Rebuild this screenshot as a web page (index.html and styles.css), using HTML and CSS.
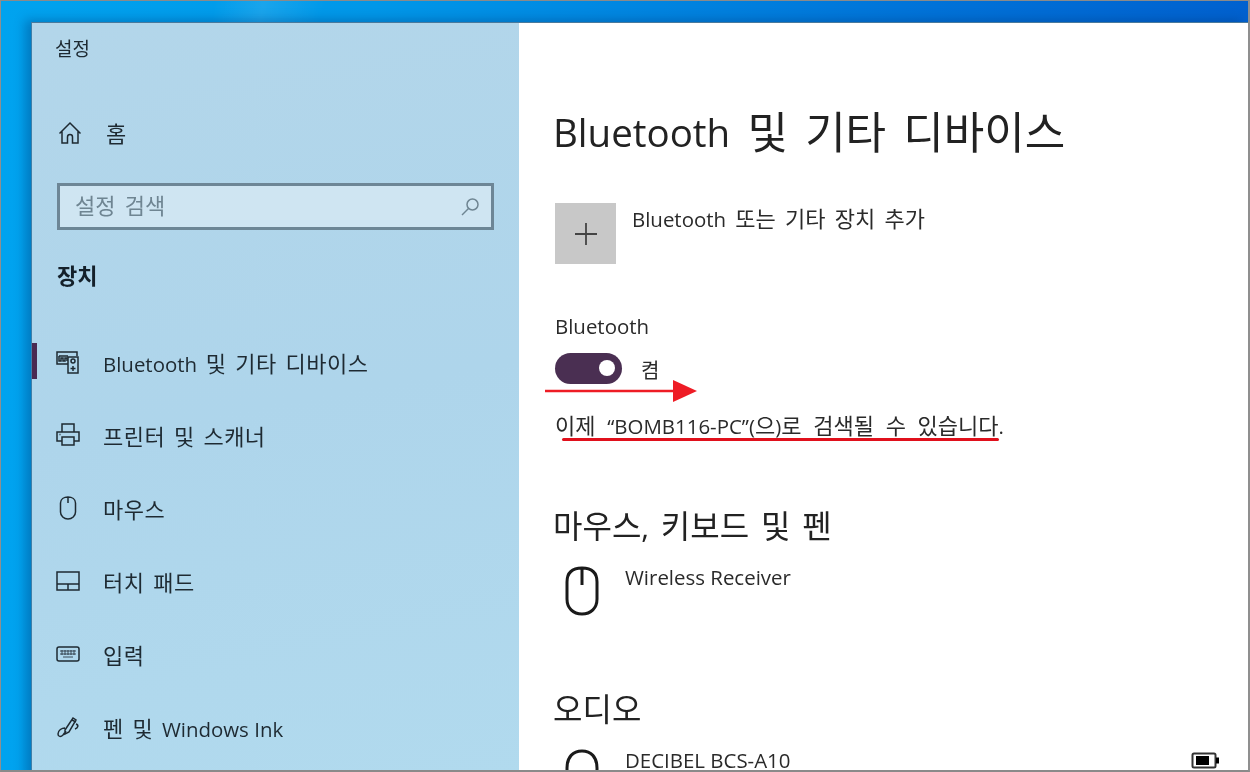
FILE: index.html
```html
<!DOCTYPE html>
<html lang="ko">
<head>
<meta charset="utf-8">
<title>설정</title>
<link rel="stylesheet" href="styles.css">
</head>
<body>
<div class="frame">
  <div class="window">
    <aside class="sidebar">
      <div class="app-title">설정</div>
      <a class="home">
        <svg class="icon" viewBox="0 0 24 24"><path d="M1.500 12.500 12 2l10.500 10.500M4 10.500V22h5.500v-6a2.500 2.500 0 0 1 5 0v6H20V10.500"/></svg>
        <span>홈</span>
      </a>
      <div class="search"><span>설정 검색</span>
        <svg class="search-icon" viewBox="0 0 20 20"><circle cx="12.500" cy="7.500" r="5.500"/><path d="M8.500 11.500 2 18"/></svg>
      </div>
      <div class="section">장치</div>
      <nav class="nav">
        <a class="nav-item active">
          <svg class="icon" viewBox="0 0 24 24"><path d="M12 14H1V2h20v4M3 6v5h2V8h2v3h2V8h2v3M3 6h9"/><rect x="12" y="7" width="10" height="16"/><circle cx="17" cy="11" r="2"/><path d="M17 16v5M14.500 18.500h5"/></svg>
          <span><span class="en">Bluetooth</span> 및 기타 디바이스</span>
        </a>
        <a class="nav-item">
          <svg class="icon" viewBox="0 0 24 24"><path d="M6 9V1h12v8M6 18H1V9h22v9h-5"/><path d="M6 14h12v8H6z"/><path d="M3.500 11.500h1"/></svg>
          <span>프린터 및 스캐너</span>
        </a>
        <a class="nav-item">
          <svg class="icon" viewBox="0 0 24 24"><path d="M12 1C8 1 4.500 3 4.500 7v9c0 4 3.500 7 7.500 7s7.500-3 7.500-7V7c0-4-3.500-6-7.500-6zM12 1v6"/></svg>
          <span>마우스</span>
        </a>
        <a class="nav-item">
          <svg class="icon" viewBox="0 0 24 24"><path d="M1 3h22v18H1zM1 15h22M12 15v6"/></svg>
          <span>터치 패드</span>
        </a>
        <a class="nav-item">
          <svg class="icon" viewBox="0 0 24 24"><rect x="1" y="5" width="22" height="14" rx="2"/><path class="thin" d="M4 9h16M4 12h16M7 15h10M6 8v5M9 8v5M12 8v5M15 8v5M18 8v5"/></svg>
          <span>입력</span>
        </a>
        <a class="nav-item">
          <svg class="icon" viewBox="0 0 24 24"><path d="M9 15 17 3l3 2-7 12-4 2zM16 5l4 2M20 9c3 1 2 4-1 5M9 13c-3 0-7 2-7 6 0 3 3 3 5 1l3-4"/></svg>
          <span>펜 및 <span class="en">Windows Ink</span></span>
        </a>
      </nav>
    </aside>
    <main class="content">
      <h1><span class="en">Bluetooth</span> 및 기타 디바이스</h1>
      <div class="add">
        <div class="add-box"><svg viewBox="0 0 24 24"><path d="M12 1v22M1 12h22"/></svg></div>
        <div class="add-label"><span class="en">Bluetooth</span> 또는 기타 장치 추가</div>
      </div>
      <div class="bt-label"><span class="en">Bluetooth</span></div>
      <div class="toggle-row">
        <div class="toggle"><i class="knob"></i></div>
        <span class="toggle-text">켬</span>
      </div>
      <p class="discover">이제 <span class="en">“BOMB116-PC”(</span>으<span class="en">)</span>로 검색될 수 있습니다<span class="en">.</span></p>
      <h2 class="h-mouse">마우스<span class="en">,</span> 키보드 및 펜</h2>
      <div class="device">
        <svg class="dev-icon" viewBox="0 0 34 50"><path d="M17 2C7 2 2 7 2 16v17c0 9 6 15 15 15s15-6 15-15V16C32 7 27 2 17 2zM17 2v17"/></svg>
        <span class="en">Wireless Receiver</span>
      </div>
      <h2 class="h-audio">오디오</h2>
      <div class="device audio">
        <svg class="dev-icon" viewBox="0 0 34 50"><path d="M2 30v-10C2 9 8 3 17 3s15 6 15 17v10"/></svg>
        <span class="en">DECIBEL BCS-A10</span>
        <svg class="battery" viewBox="0 0 30 17"><rect x="1.500" y="1.500" width="23" height="14" rx="1.500"/><rect class="fill" x="5" y="4" width="13" height="9"/><rect class="fill" x="25" y="5.500" width="3" height="6"/></svg>
      </div>
    </main>
  </div>
  <div class="mark-arrow">
    <svg viewBox="0 0 152 24"><path d="M0 12h128" class="shaft"/><path d="M128 1l24 11-24 11z" class="head"/></svg>
  </div>
  <div class="mark-line"></div>
</div>
</body>
</html>
```

FILE: styles.css
```css
* { box-sizing: border-box; }
html, body { margin: 0; height: 100%; }
body {
  width: 1250px;
  height: 772px;
  overflow: hidden;
  font-family: "Open Sans", "Noto Sans CJK KR", sans-serif;
  color: #222;
  word-spacing: .22em;
}
.en { font-size: .93em; word-spacing: 0; letter-spacing: 0; }
.frame {
  position: relative;
  width: 1250px;
  height: 772px;
  padding: 22px 2px 1px 31px;
  border-top: 1px solid #8a8a8a;
  border-right: 2px solid #8f8f8f;
  border-bottom: 2px solid #8a8a8a;
  border-left: 1px solid #8f8f8f;
  background:
    linear-gradient(100deg, transparent 17%, rgba(255, 255, 255, .1) 21%, transparent 26%) top / 100% 22px no-repeat,
    linear-gradient(90deg, #00a3ef 0%, #0097e8 30%, #0072d8 75%, #0061cf 100%);
  overflow: hidden;
}
.window {
  display: flex;
  height: 760px;
  margin: -1px -2px 0 -1px;
  border-top: 1px solid #4a7a9c;
  border-left: 1px solid #3f7fa8;
  box-shadow: -6px -2px 10px rgba(0, 50, 110, .35);
  overflow: hidden;
  filter: blur(.3px);
}
.sidebar {
  flex: 0 0 487px;
  padding: 0 0 0 23px;
  background: linear-gradient(170deg, #b3d6ea 0%, #aed5eb 50%, #b1daee 100%);
  color: #1e2a32;
}
.content {
  flex: 1;
  background: #fff;
  padding: 0 0 0 34px;
  color: #2a2a2a;
}
.app-title { font-size: 19px; line-height: 20px; padding-top: 16px; height: 62px; font-weight: 400; }
.home { display: flex; align-items: center; gap: 24px; height: 40px; margin-top: 28px; font-size: 22px; padding-left: 3px; }
.home span { margin-bottom: 3px; }
.icon { width: 24px; height: 24px; flex: none; fill: none; stroke: #1e2a32; stroke-width: 1.500; }
.icon .thin { stroke-width: .8; }
.search {
  display: flex;
  align-items: center;
  justify-content: space-between;
  width: 437px;
  height: 47px;
  margin: 30px 0 0 2px;
  padding: 0 11px 5px 15px;
  border: 3px solid #6d8696;
  background: #cfe5f2;
  color: #6f8592;
  font-size: 22px;
}
.search-icon { width: 20px; height: 20px; margin-top: 5px; fill: none; stroke: #6f8592; stroke-width: 1.500; }
.section { font-size: 22px; font-weight: 700; line-height: 28px; margin: 31px 0 0 2px; color: #14202a; }
.nav { margin-top: 36px; margin-left: -24px; }
.nav-item { position: relative; display: flex; align-items: center; gap: 23px; height: 73px; padding-left: 25px; font-size: 22px; letter-spacing: .5px; word-spacing: 2.500px; }
.nav-item.active::before { content: ""; position: absolute; left: 0; top: 18px; width: 6px; height: 36px; background: #4a2a52; }
h1 { margin: 0; padding-top: 82px; height: 170px; font-size: 44px; line-height: 54px; font-weight: 400; color: #222; white-space: nowrap; word-spacing: 5.800px; }
h1 .en { font-size: .875em; vertical-align: 2px; }
.add { display: flex; gap: 16px; margin: 10px 0 0 2px; }
.add-box { display: flex; align-items: center; justify-content: center; width: 61px; height: 61px; background: #c8c8c8; }
.add-box svg { width: 24px; height: 24px; fill: none; stroke: #444; stroke-width: 1.800; }
.add-label { font-size: 22px; line-height: 28px; margin-top: 1px; }
.bt-label { font-size: 22px; line-height: 28px; margin: 47px 0 0 2px; }
.toggle-row { display: flex; align-items: center; gap: 19px; margin: 12px 0 0 2px; font-size: 20px; height: 32px; }
.toggle-text { margin-top: 3px; }
.toggle { display: flex; align-items: center; justify-content: flex-end; width: 67px; height: 31px; padding-right: 7px; border-radius: 16px; background: #4a2f52; }
.knob { width: 16px; height: 16px; border-radius: 50%; background: #fff; }
.discover { margin: 27px 0 0 2px; font-size: 22px; line-height: 28px; white-space: nowrap; word-spacing: 6px; }
h2 { margin: 0; font-size: 32px; font-weight: 400; line-height: 40px; color: #222; }
.h-mouse { margin-top: 66px; }
.h-audio { margin-top: 0; }
.device { display: flex; gap: 26px; font-size: 22px; line-height: 28px; margin-left: 12px; }
.device:not(.audio) { height: 130px; margin-top: 12px; padding-top: 4px; }
.dev-icon { width: 34px; height: 50px; flex: none; margin-top: 3px; fill: none; stroke: #1a1a1a; stroke-width: 3; }
.audio { position: relative; padding-top: 0; margin-top: 17px; height: 60px; }
.audio .dev-icon { margin-top: 2px; }
.battery { position: absolute; left: 626px; top: 6px; width: 30px; height: 17px; fill: none; stroke: #333; stroke-width: 2; }
.battery .fill { fill: #000; stroke: none; }
.mark-arrow { position: absolute; left: 544px; top: 378px; width: 152px; height: 24px; }
.mark-arrow svg { display: block; width: 152px; height: 24px; }
.shaft { stroke: #ee1c25; stroke-width: 2.500; fill: none; }
.head { fill: #ee1c25; }
.mark-line { position: absolute; left: 561px; top: 437px; width: 437px; height: 3px; background: #e0101c; border-radius: 2px; }
```
